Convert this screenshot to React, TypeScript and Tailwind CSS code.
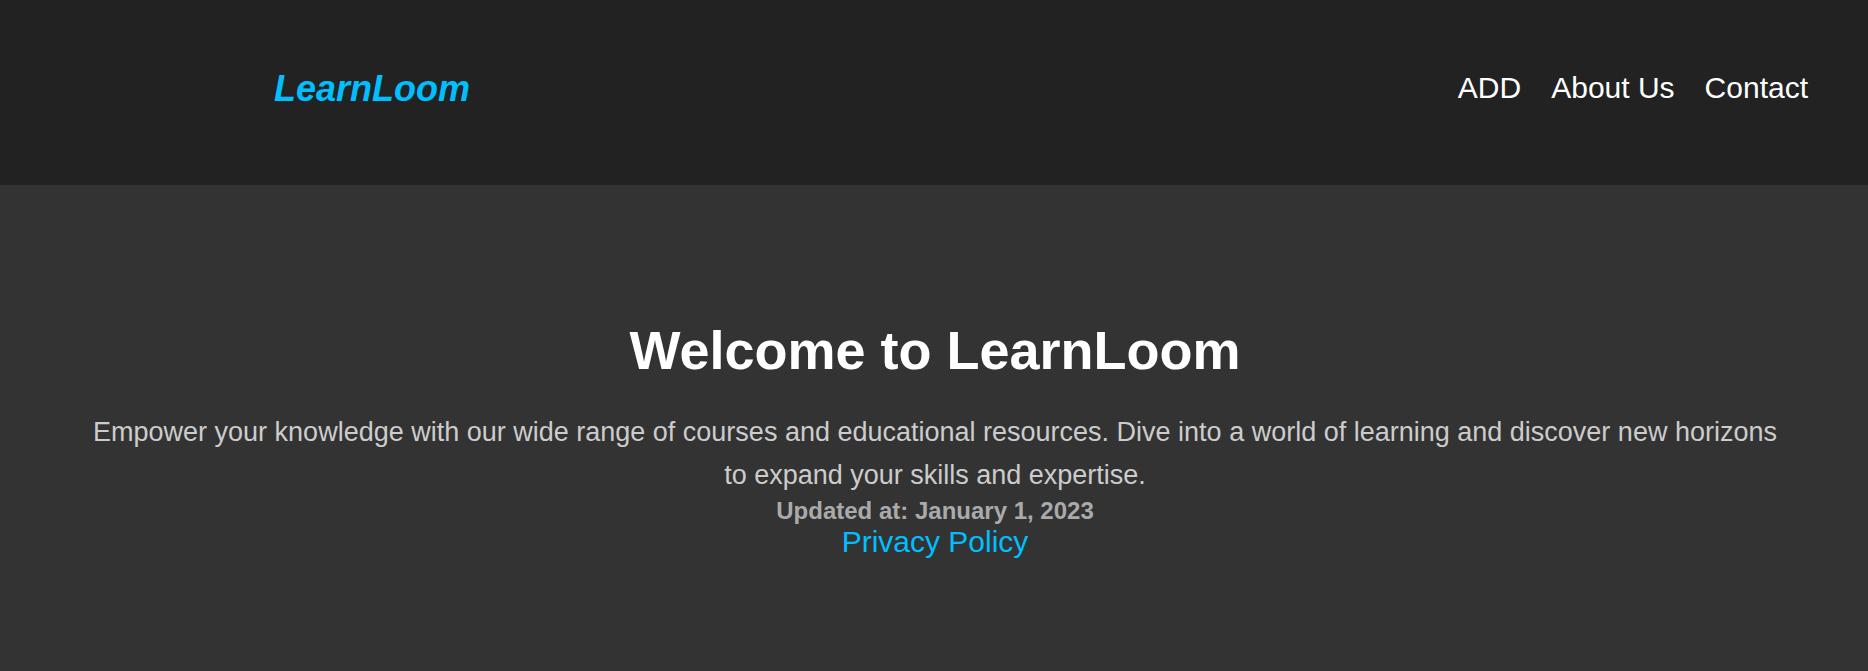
export default function App() {
  return (
    <div className="flex min-h-screen flex-col bg-[#333333] font-['Liberation_Sans',Arial,sans-serif] text-white">
      <header className="flex items-start justify-between bg-[#222222] pt-[60px] pr-[60px] pb-[67px] pl-[274px]">
        <a href="#home" className="text-[36px] leading-[58px] font-bold text-[#00bfff] italic">
          LearnLoom
        </a>
        <nav>
          <ul className="flex gap-[30px] text-[30px] leading-[56px]">
            <li><a href="#add">ADD</a></li>
            <li><a href="#about">About Us</a></li>
            <li><a href="#contact">Contact</a></li>
          </ul>
        </nav>
      </header>
      <main className="pt-[120px] pr-[90px] pl-[92px] text-center">
        <h1 className="text-[54px] leading-[90px] font-bold">Welcome to LearnLoom</h1>
        <p className="mt-[16px] text-[27px] leading-[43px] text-[#cccccc]">
          Empower your knowledge with our wide range of courses and educational resources. Dive into a world of learning and discover new horizons to expand your skills and expertise.
        </p>
        <p className="text-[24px] leading-[28px] font-bold text-[#aaaaaa]">Updated at: January 1, 2023</p>
        <a href="#privacy" className="block text-[30px] leading-[34px] text-[#00bfff]">Privacy Policy</a>
      </main>
    </div>
  );
}
